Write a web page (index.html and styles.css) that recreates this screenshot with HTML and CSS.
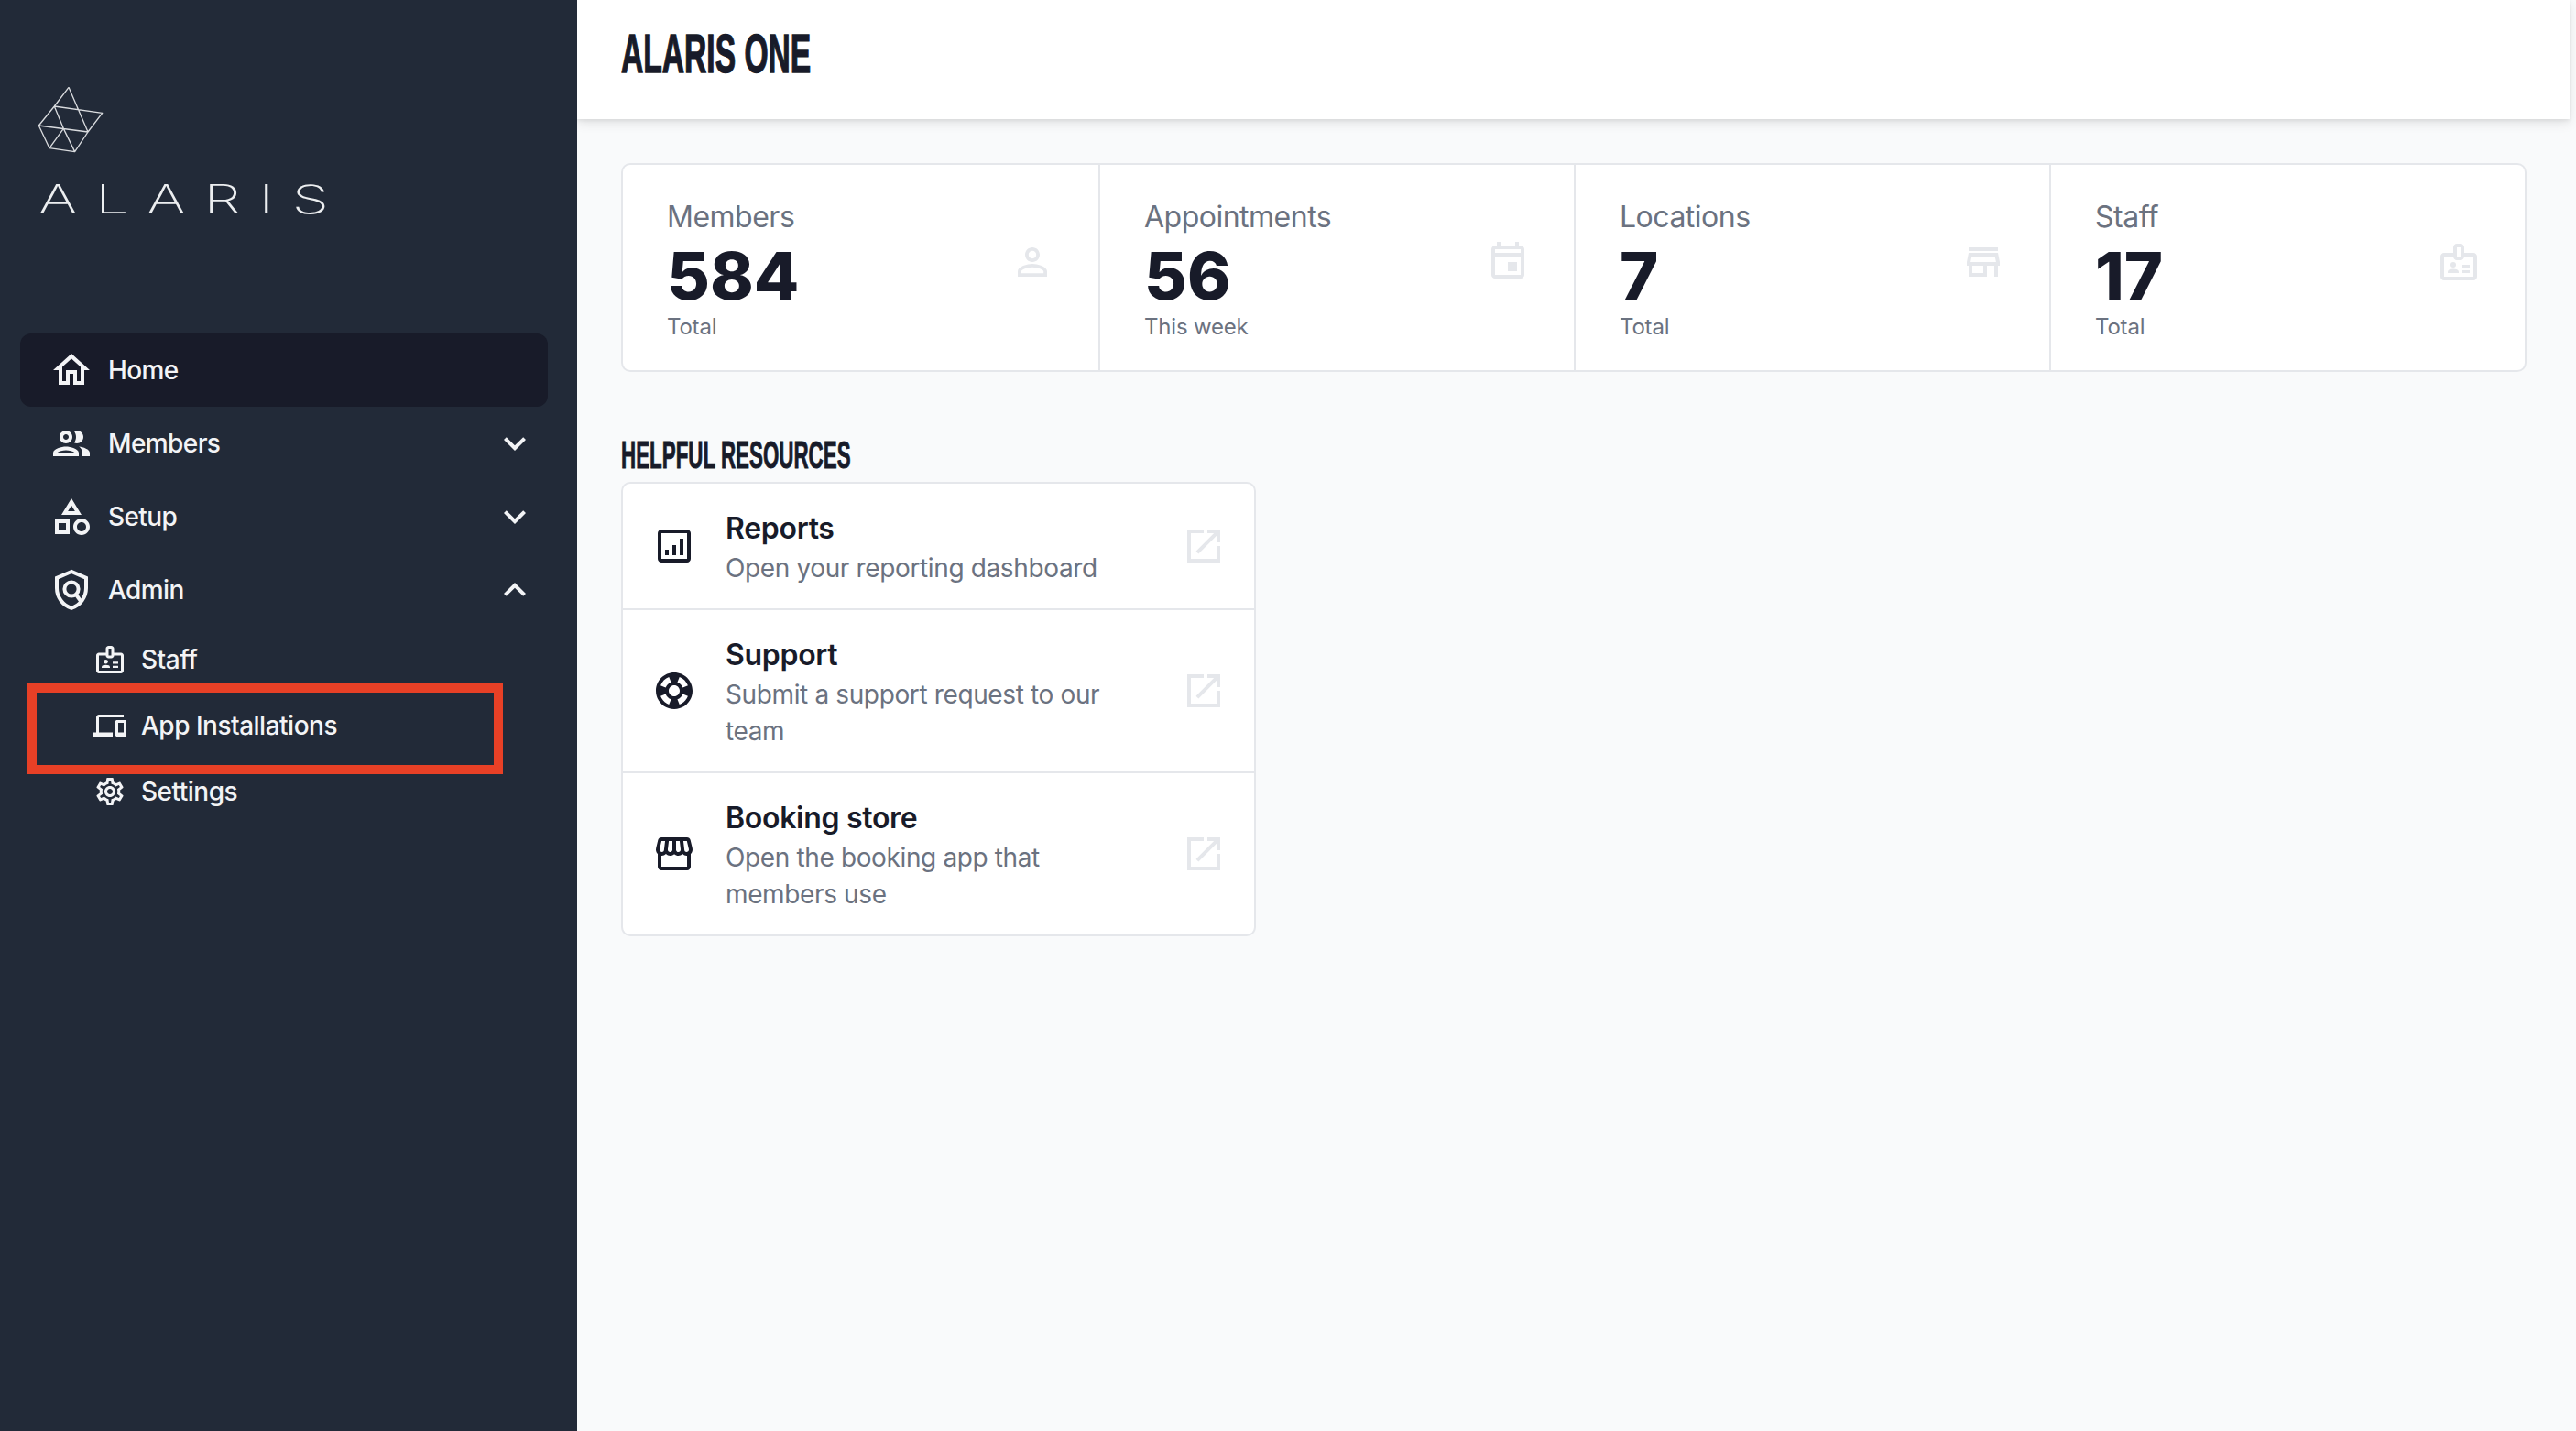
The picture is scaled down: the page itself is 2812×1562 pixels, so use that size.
FILE: index.html
```html
<!DOCTYPE html>
<html lang="en">
<head>
<meta charset="utf-8">
<title>Alaris One</title>
<link rel="stylesheet" href="styles.css">
</head>
<body>
<div class="app">
  <aside class="sidebar">
    <div class="logo">
      <svg class="logo-mark" viewBox="30 36 222 225" fill="none" stroke="#d9dbde" stroke-width="4" stroke-linejoin="round">
        <path d="M135 43 88 105 37 168 72 242 155 254 198 189 245 127 88 105 118 178 155 254M135 43 198 189M37 168 198 189M72 242 118 178"/>
      </svg>
      <span class="logo-text">ALARIS</span>
    </div>
    <nav class="nav">
      <a class="nav-item active">
        <svg class="nav-icon" viewBox="0 0 24 24"><path d="M12 5.69l5 4.5V18h-2v-6H9v6H7v-7.81l5-4.5M12 3L2 12h3v8h6v-6h2v6h6v-8h3L12 3z"/></svg>
        <span class="nav-label">Home</span>
      </a>
      <a class="nav-item">
        <svg class="nav-icon" viewBox="0 0 24 24"><path d="M9 13.75c-2.34 0-7 1.17-7 3.5V19h14v-1.75c0-2.33-4.66-3.5-7-3.5zM4.34 17c.84-.58 2.87-1.25 4.66-1.25s3.82.67 4.66 1.25H4.34zM9 12c1.93 0 3.5-1.57 3.5-3.5S10.93 5 9 5 5.5 6.57 5.5 8.5 7.07 12 9 12zm0-5c.83 0 1.5.67 1.5 1.5S9.83 10 9 10s-1.5-.67-1.5-1.5S8.17 7 9 7zm7.04 6.81c1.16.84 1.96 1.96 1.96 3.44V19h4v-1.75c0-2.02-3.5-3.17-5.96-3.44zM15 12c1.93 0 3.5-1.57 3.5-3.5S16.93 5 15 5c-.54 0-1.04.13-1.5.35.63.89 1 1.98 1 3.15s-.37 2.26-1 3.15c.46.22.96.35 1.5.35z"/></svg>
        <span class="nav-label">Members</span>
        <svg class="nav-chevron" viewBox="0 0 24 24"><path d="M7.41 8.59 12 13.17l4.59-4.58L18 10l-6 6-6-6z"/></svg>
      </a>
      <a class="nav-item">
        <svg class="nav-icon" viewBox="0 0 24 24"><path d="M12 2l-5.5 9h11L12 2zm0 3.84L13.93 9h-3.87L12 5.84zM17.5 13c-2.49 0-4.5 2.01-4.5 4.5s2.01 4.5 4.5 4.5 4.5-2.01 4.5-4.5-2.01-4.5-4.5-4.5zm0 7c-1.38 0-2.5-1.12-2.5-2.5s1.12-2.5 2.5-2.5 2.5 1.12 2.5 2.5-1.12 2.5-2.5 2.5zM3 21.5h8v-8H3v8zm2-6h4v4H5v-4z"/></svg>
        <span class="nav-label">Setup</span>
        <svg class="nav-chevron" viewBox="0 0 24 24"><path d="M7.41 8.59 12 13.17l4.59-4.58L18 10l-6 6-6-6z"/></svg>
      </a>
      <a class="nav-item">
        <svg class="nav-icon" viewBox="0 0 24 24"><path class="stroke-icon" d="M12 2 4 5.4V11c0 4.9 3.3 9.5 8 10.9 4.7-1.4 8-6 8-10.9V5.4z"/><circle class="stroke-icon" cx="12" cy="11.5" r="3.8"/><path class="stroke-icon" d="m14.5 14.5 2.7 3.8"/></svg>
        <span class="nav-label">Admin</span>
        <svg class="nav-chevron" viewBox="0 0 24 24"><path d="M12 8l-6 6 1.41 1.41L12 10.83l4.59 4.58L18 14z"/></svg>
      </a>
      <div class="subnav">
        <a class="sub-item">
          <svg class="sub-icon" viewBox="0 0 24 24"><path d="M20 7h-5V4c0-1.1-.9-2-2-2h-2c-1.1 0-2 .9-2 2v3H4c-1.1 0-2 .9-2 2v11c0 1.1.9 2 2 2h16c1.1 0 2-.9 2-2V9c0-1.100-.9-2-2-2zM11 4h2v5h-2V4zm9 16H4V9h5c0 1.100.9 2 2 2h2c1.100 0 2-.9 2-2h5v11z"/><circle cx="9" cy="13.500" r="1.500"/><path d="M11.080 16.180C10.440 15.900 9.740 15.750 9 15.750s-1.440.15-2.080.43C6.360 16.420 6 16.960 6 17.570V18h6v-.43c0-.61-.36-1.150-.92-1.390zM14 13.500h4V15h-4zM14 16.500h4V18h-4z"/></svg>
          <span class="nav-label">Staff</span>
        </a>
        <a class="sub-item">
          <svg class="sub-icon" viewBox="0 0 24 24"><path d="M4 6h18V4H4c-1.100 0-2 .9-2 2v11H0v3h14v-3H4V6zm19 2h-6c-.55 0-1 .45-1 1v10c0 .55.45 1 1 1h6c.55 0 1-.45 1-1V9c0-.55-.45-1-1-1zm-1 9h-4v-7h4v7z"/></svg>
          <span class="nav-label">App Installations</span>
        </a>
        <a class="sub-item">
          <svg class="sub-icon" viewBox="0 0 24 24"><path d="M19.430 12.980c.04-.32.07-.64.07-.98 0-.34-.03-.66-.07-.98l2.110-1.650c.19-.15.24-.42.12-.64l-2-3.460c-.09-.16-.26-.25-.44-.25-.06 0-.12.01-.17.03l-2.490 1c-.52-.4-1.080-.73-1.690-.98l-.38-2.650C14.460 2.180 14.250 2 14 2h-4c-.25 0-.46.18-.49.42l-.38 2.650c-.61.25-1.170.59-1.690.98l-2.490-1c-.06-.02-.12-.03-.18-.03-.17 0-.34.09-.43.25l-2 3.460c-.13.22-.07.49.12.64l2.110 1.650c-.04.32-.07.65-.07.98 0 .33.03.66.07.98l-2.110 1.650c-.19.15-.24.42-.12.64l2 3.460c.09.16.26.25.44.25.06 0 .12-.01.17-.03l2.490-1c.52.4 1.080.73 1.690.98l.38 2.650c.03.24.24.42.49.42h4c.25 0 .46-.18.49-.42l.38-2.650c.61-.25 1.170-.59 1.690-.98l2.490 1c.06.02.12.03.18.03.17 0 .34-.09.43-.25l2-3.460c.12-.22.07-.49-.12-.64l-2.110-1.650zm-1.980-1.710c.04.31.05.52.05.73 0 .21-.02.43-.05.73l-.14 1.130.89.7 1.080.84-.7 1.210-1.270-.51-1.040-.42-.9.68c-.43.32-.84.56-1.250.73l-1.060.43-.16 1.130-.2 1.350h-1.400l-.19-1.350-.16-1.130-1.060-.43c-.43-.18-.83-.41-1.230-.71l-.91-.7-1.060.43-1.270.51-.7-1.210 1.080-.84.89-.7-.14-1.130c-.03-.31-.05-.54-.05-.74s.02-.43.05-.73l.14-1.130-.89-.7-1.080-.84.7-1.210 1.270.51 1.040.42.9-.68c.43-.32.84-.56 1.250-.73l1.060-.43.16-1.130.2-1.350h1.390l.19 1.350.16 1.130 1.060.43c.43.18.83.41 1.230.71l.91.7 1.060-.43 1.270-.51.7 1.210-1.070.85-.89.7.14 1.130zM12 8c-2.210 0-4 1.790-4 4s1.790 4 4 4 4-1.790 4-4-1.790-4-4-4zm0 6c-1.100 0-2-.9-2-2s.9-2 2-2 2 .9 2 2-.9 2-2 2z"/></svg>
          <span class="nav-label">Settings</span>
        </a>
      </div>
    </nav>
    <div class="annotation"></div>
  </aside>
  <div class="main">
    <header class="topbar"><h1 class="page-title">ALARIS ONE</h1></header>
    <div class="content">
      <section class="stats">
        <div class="stat">
          <div class="stat-text"><div class="stat-label">Members</div><div class="stat-value">584</div><div class="stat-sub">Total</div></div>
          <svg class="stat-icon" viewBox="0 0 24 24"><path d="M12 5.900c1.160 0 2.100.94 2.100 2.100s-.94 2.100-2.100 2.100S9.900 9.160 9.900 8s.94-2.100 2.100-2.100m0 9c2.970 0 6.100 1.460 6.100 2.100v1.100H5.900V17c0-.64 3.130-2.100 6.100-2.100M12 4C9.790 4 8 5.790 8 8s1.790 4 4 4 4-1.790 4-4-1.790-4-4-4zm0 9c-2.670 0-8 1.340-8 4v3h16v-3c0-2.660-5.330-4-8-4z"/></svg>
        </div>
        <div class="stat">
          <div class="stat-text"><div class="stat-label">Appointments</div><div class="stat-value">56</div><div class="stat-sub">This week</div></div>
          <svg class="stat-icon" viewBox="0 0 24 24"><path d="M19 3h-1V1h-2v2H8V1H6v2H5c-1.110 0-1.990.9-1.990 2L3 19c0 1.100.89 2 2 2h14c1.100 0 2-.9 2-2V5c0-1.100-.9-2-2-2zm0 16H5V9h14v10zm0-12H5V5h14v2zM12 12h5v5h-5z"/></svg>
        </div>
        <div class="stat">
          <div class="stat-text"><div class="stat-label">Locations</div><div class="stat-value">7</div><div class="stat-sub">Total</div></div>
          <svg class="stat-icon" viewBox="0 0 24 24"><path d="M18.360 9l.6 3H5.040l.6-3h12.720M20 4H4v2h16V4zm0 3H4l-1 5v2h1v6h10v-6h4v6h2v-6h1v-2l-1-5zM6 18v-4h6v4H6z"/></svg>
        </div>
        <div class="stat">
          <div class="stat-text"><div class="stat-label">Staff</div><div class="stat-value">17</div><div class="stat-sub">Total</div></div>
          <svg class="stat-icon" viewBox="0 0 24 24"><path d="M20 7h-5V4c0-1.100-.9-2-2-2h-2c-1.100 0-2 .9-2 2v3H4c-1.100 0-2 .9-2 2v11c0 1.100.9 2 2 2h16c1.100 0 2-.9 2-2V9c0-1.100-.9-2-2-2zM11 4h2v5h-2V4zm9 16H4V9h5c0 1.100.9 2 2 2h2c1.100 0 2-.9 2-2h5v11z"/><circle cx="9" cy="13.500" r="1.500"/><path d="M11.080 16.180C10.440 15.900 9.740 15.750 9 15.750s-1.440.15-2.080.43C6.360 16.420 6 16.960 6 17.570V18h6v-.43c0-.61-.36-1.150-.92-1.390zM14 13.500h4V15h-4zM14 16.500h4V18h-4z"/></svg>
        </div>
      </section>
      <h2 class="section-title">HELPFUL RESOURCES</h2>
      <section class="resources">
        <a class="resource">
          <svg class="res-icon" viewBox="0 0 24 24"><path d="M19 3H5c-1.100 0-2 .9-2 2v14c0 1.100.9 2 2 2h14c1.100 0 2-.9 2-2V5c0-1.100-.9-2-2-2zm0 16H5V5h14v14zM7 14h2v3H7zM11 11.500h2V17h-2zM15 8h2v9h-2z"/></svg>
          <div class="res-text"><div class="res-title">Reports</div><div class="res-desc">Open your reporting dashboard</div></div>
          <svg class="res-ext" viewBox="0 0 24 24"><path d="M19 19H5V5h7V3H3v18h18v-9h-2v7zM14 3v2h3.590l-9.830 9.830 1.410 1.410L19 6.410V10h2V3h-7z"/></svg>
        </a>
        <a class="resource">
          <svg class="res-icon" viewBox="0 0 24 24"><path d="M12 2C6.480 2 2 6.480 2 12s4.480 10 10 10 10-4.480 10-10S17.520 2 12 2zm7.460 7.120l-2.780 1.150c-.51-1.360-1.580-2.440-2.950-2.940l1.150-2.780c2.100.8 3.770 2.470 4.580 4.570zM12 15c-1.660 0-3-1.340-3-3s1.340-3 3-3 3 1.340 3 3-1.340 3-3 3zM9.130 4.540l1.170 2.780c-1.380.5-2.470 1.590-2.980 2.970L4.540 9.130c.81-2.110 2.480-3.780 4.590-4.590zM4.540 14.870l2.780-1.150c.51 1.380 1.590 2.460 2.970 2.960l-1.170 2.780c-2.100-.81-3.770-2.480-4.580-4.590zm10.340 4.590l-1.150-2.780c1.370-.51 2.450-1.590 2.950-2.970l2.780 1.170c-.81 2.100-2.480 3.770-4.580 4.580z"/></svg>
          <div class="res-text"><div class="res-title">Support</div><div class="res-desc">Submit a support request to our team</div></div>
          <svg class="res-ext" viewBox="0 0 24 24"><path d="M19 19H5V5h7V3H3v18h18v-9h-2v7zM14 3v2h3.590l-9.830 9.830 1.410 1.410L19 6.410V10h2V3h-7z"/></svg>
        </a>
        <a class="resource">
          <svg class="res-icon" viewBox="0 0 24 24"><path d="M21.900 8.890l-1.050-4.370c-.22-.9-1-1.520-1.910-1.520H5.050c-.9 0-1.690.63-1.900 1.520L2.100 8.890c-.24 1.020-.02 2.060.62 2.880.08.11.19.19.28.29V19c0 1.100.9 2 2 2h14c1.100 0 2-.9 2-2v-6.940c.09-.09.2-.18.28-.28.64-.82.87-1.870.62-2.890zm-2.990-3.900l1.050 4.370c.1.42.01.84-.25 1.170-.14.18-.44.47-.94.47-.61 0-1.140-.49-1.210-1.140L16.980 5l1.930-.01zM13 5h1.960l.54 4.520c.05.39-.07.78-.33 1.070-.22.26-.54.41-.95.41-.67 0-1.220-.59-1.220-1.310V5zM8.490 9.520L9.040 5H11v4.690c0 .72-.55 1.310-1.290 1.310-.34 0-.65-.15-.89-.41-.25-.29-.37-.68-.33-1.070zm-4.450-.16L5.050 5h1.970l-.58 4.860c-.08.65-.6 1.140-1.210 1.140-.49 0-.8-.29-.93-.47-.27-.32-.36-.75-.26-1.170zM5 19v-6.030c.08.01.15.03.23.03.87 0 1.660-.36 2.240-.95.6.6 1.400.95 2.310.95.87 0 1.650-.36 2.230-.93.59.57 1.390.93 2.290.93.84 0 1.640-.35 2.240-.95.58.59 1.370.95 2.240.95.08 0 .15-.02.23-.03V19H5z"/></svg>
          <div class="res-text"><div class="res-title">Booking store</div><div class="res-desc">Open the booking app that members use</div></div>
          <svg class="res-ext" viewBox="0 0 24 24"><path d="M19 19H5V5h7V3H3v18h18v-9h-2v7zM14 3v2h3.590l-9.830 9.830 1.410 1.410L19 6.410V10h2V3h-7z"/></svg>
        </a>
      </section>
    </div>
  </div>
</div>
</body>
</html>
```
FILE: styles.css
```css
* { box-sizing: border-box; }
html, body { margin: 0; height: 100%; overflow: hidden; }
body { font-family: Inter, "Noto Sans", sans-serif; background: #f9fafb; color: #181b29; }
.app { display: flex; height: 1562px; }

.sidebar { position: relative; flex: 0 0 630px; background: #222a38; padding: 93px 32px 0 22px; color: #f3f4f6; }
.logo { display: flex; flex-direction: column; align-items: flex-start; padding-left: 18px; height: 271px; }
.logo-mark { display: block; width: 74px; height: 75px; }
.logo-text { display: block; margin: 28px 0 0 2px; font-size: 43px; line-height: 43px; font-weight: 200; letter-spacing: 13.2px; transform: scaleX(1.5); transform-origin: left center; color: #eceef0; }

.nav { display: flex; flex-direction: column; }
.nav-item { display: flex; align-items: center; height: 80px; padding: 0 12px 0 32px; border-radius: 12px; gap: 16px; }
.nav-item.active { background: #181b29; }
.nav-icon { width: 48px; height: 48px; fill: #f3f4f6; flex: none; }
.stroke-icon { fill: none; stroke: #f3f4f6; stroke-width: 2; }
.nav-label { font-size: 28px; line-height: 40px; font-weight: 500; letter-spacing: -0.6px; }
.sub-item .nav-label { letter-spacing: -0.5px; }
.nav-chevron { width: 48px; height: 48px; margin-left: auto; fill: #f3f4f6; flex: none; }
.subnav { display: flex; flex-direction: column; padding-left: 80px; }
.sub-item { display: flex; align-items: center; height: 72px; gap: 16px; }
.sub-icon { width: 36px; height: 36px; fill: #f3f4f6; flex: none; }
.annotation { position: absolute; left: 30px; top: 746px; width: 519px; height: 99px; border: 10px solid #e84026; }

.main { flex: 0 0 2175px; display: flex; flex-direction: column; }
.topbar { height: 130px; background: #fff; display: flex; align-items: flex-start; padding: 33px 48px 0; box-shadow: 0 4px 12px rgba(0,0,0,.1), 0 2px 4px rgba(0,0,0,.06); }
.page-title { margin: 0; font-family: "Liberation Sans", sans-serif; font-weight: 700; font-size: 60px; line-height: 52px; transform: scaleX(.56); transform-origin: left center; white-space: nowrap; -webkit-text-stroke: 1.5px #181b29; }
.content { padding: 48px 47px 0 48px; }

.stats { display: grid; grid-template-columns: repeat(4, 1fr); height: 228px; background: #fff; border: 2px solid #e5e7eb; border-radius: 10px; }
.stat { display: flex; justify-content: space-between; align-items: flex-start; padding: 37px 48px 0; border-left: 2px solid #e5e7eb; }
.stat:first-child { border-left: 0; }
.stat-label { font-size: 32px; line-height: 40px; color: #6b7280; letter-spacing: -0.5px; }
.stat-value { font-size: 72px; line-height: 72px; font-weight: 800; margin-top: 8px; }
.stat-sub { font-size: 24px; line-height: 32px; color: #6b7280; margin-top: 4px; letter-spacing: -0.2px; }
.stat-icon { width: 48px; height: 48px; fill: #e5e7eb; flex: none; margin-top: 45px; }

.section-title { margin: 71px 0 0; height: 49px; font-family: "Liberation Sans", sans-serif; font-weight: 700; font-size: 43px; line-height: 38px; transform: scaleX(.52); transform-origin: left center; white-space: nowrap; -webkit-text-stroke: 1px #181b29; }
.resources { width: 693px; background: #fff; border: 2px solid #e5e7eb; border-radius: 10px; }
.resource { display: flex; align-items: center; padding: 0 32px; border-top: 2px solid #e5e7eb; }
.resource:first-child { border-top: 0; }
.res-icon { width: 48px; height: 48px; fill: #181b29; flex: none; }
.res-text { flex: none; width: 456px; margin: 0 42px 0 32px; padding: 29px 0 24px; }
.res-title { font-size: 32px; line-height: 40px; font-weight: 600; letter-spacing: -0.3px; }
.res-desc { font-size: 28px; line-height: 40px; color: #6b7280; margin-top: 3px; letter-spacing: -0.37px; }
.res-ext { width: 48px; height: 48px; fill: #e5e7eb; flex: none; }
```
